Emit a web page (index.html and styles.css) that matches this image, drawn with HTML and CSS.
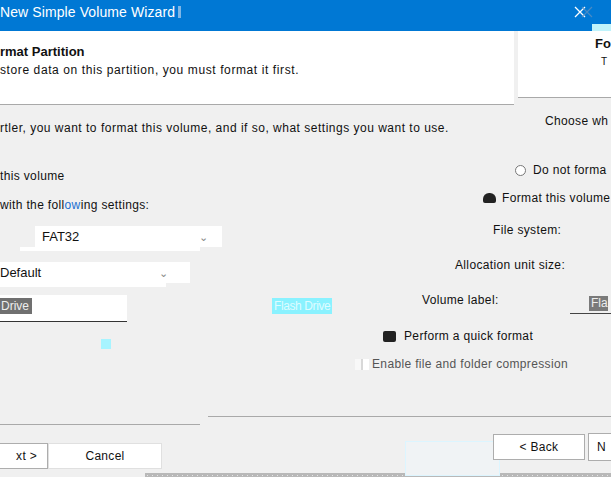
FILE: index.html
```html
<!DOCTYPE html>
<html>
<head>
<meta charset="utf-8">
<link rel="stylesheet" href="styles.css">
</head>
<body>
<div class="win">
  <div class="titlebar">
    <span class="title">New Simple Volume Wizard</span>
    <span class="stub"></span>
    <span class="close">
      <svg width="24" height="14" viewBox="0 0 24 14"><path d="M1 2 L11 12 M11 2 L1 12" stroke="#fff" stroke-width="1.3" fill="none"/><path d="M8 2 L18 12 M18 2 L8 12" stroke="#5a8fc0" stroke-width="1.2" fill="none" opacity="0.8"/></svg>
    </span>
    <span class="cyanblock"></span>
  </div>
  <div class="header">
    <div class="hleft">
      <div class="htitle">rmat Partition</div>
      <div class="hsub">store data on this partition, you must format it first.</div>
    </div>
    <div class="hright">
      <div class="htitle r">Fo</div>
      <div class="hsub r">T</div>
    </div>
  </div>
  <div class="body">
    <div class="layer lleft">
      <div class="txt intro">rtler, you want to format this volume, and if so, what settings you want to use.</div>
      <div class="txt thisvol">this volume</div>
      <div class="txt withset">with the foll<span class="blu">ow</span>ing settings:</div>
      <div class="combo fat">
        <div class="cbtop"><span class="ctext">FAT32</span><span class="chev">&#8964;</span></div>
        <div class="cbbot"></div>
      </div>
      <div class="combo def">
        <div class="cbtop"><span class="ctext">Default</span><span class="chev">&#8964;</span></div>
        <div class="cbbot"></div>
      </div>
      <div class="volrow">
        <div class="volfield"><span class="sel">Drive</span></div>
        <div class="cyansel">Flash Drive</div>
      </div>
      <div class="cyansq"></div>
      <div class="sep sepl"></div>
      <div class="btnrow">
        <div class="btn next">xt &gt;</div>
        <div class="btn cancel">Cancel</div>
      </div>
      <div class="checker"></div>
    </div>
    <div class="layer lright">
      <div class="txt choose">Choose wh</div>
      <div class="opt o1"><span class="radio empty"></span><span class="txt">Do not forma</span></div>
      <div class="opt o2"><span class="radio full"></span><span class="txt">Format this volume</span></div>
      <div class="txt fs">File system:</div>
      <div class="txt aus">Allocation unit size:</div>
      <div class="opt vl"><span class="txt">Volume label:</span><span class="flafield"><span class="fla">Fla</span></span></div>
      <div class="opt o3"><span class="chk full"></span><span class="txt">Perform a quick format</span></div>
      <div class="opt o4"><span class="chk grey"></span><span class="txt greyt">Enable file and folder compression</span></div>
      <div class="sep sepr"></div>
      <div class="btnrow r">
        <div class="ghost"></div>
        <div class="btn back">&lt; Back</div>
        <div class="btn nbtn">N</div>
      </div>
    </div>
  </div>
</div>
</body>
</html>
```

FILE: styles.css
```css
* { box-sizing: border-box; }
html, body { margin: 0; padding: 0; }
body {
  width: 611px; height: 477px; overflow: hidden;
  background: #f0f0f0;
  font-family: "Liberation Sans", Arial, sans-serif;
  font-size: 12px; color: #111;
}
.win { width: 611px; height: 477px; display: flex; flex-direction: column; overflow: hidden; }

.titlebar {
  height: 31px; flex: none; background: #0078d4;
  display: flex; align-items: flex-start; position: relative;
}
.title { color: #fff; font-size: 14px; line-height: 16px; margin-top: 4px; margin-left: 0; letter-spacing: 0.1px; white-space: nowrap; }
.stub { width: 3px; height: 12px; background: #7fb6e6; margin-top: 6px; margin-left: 3px; }
.close { margin-left: auto; margin-right: 13px; margin-top: 5px; display: flex; }
.cyanblock { position: absolute; right: 0; bottom: 0; width: 19px; height: 7px; background: #bff3fb; }

.header { height: 74px; flex: none; display: flex; align-items: flex-start; }
.hleft { width: 516px; height: 74px; background: #fff; border-bottom: 1px solid #a9a9a9; padding-top: 13px; }
.hright { flex: 1; height: 67px; margin-left: 4px; background: #fff; border-bottom: 1px solid #a9a9a9; padding-top: 5px; padding-left: 77px; }
.htitle { font-weight: bold; font-size: 13px; line-height: 16px; white-space: nowrap; }
.hsub { font-size: 12px; line-height: 16px; margin-top: 2px; white-space: nowrap; letter-spacing: 0.6px; }
.hsub.r { margin-left: 6px; font-size: 10px; }

.body { flex: 1; display: grid; min-height: 0; }
.layer { grid-area: 1 / 1; display: flex; flex-direction: column; align-items: flex-start; min-width: 0; }
.txt { line-height: 16px; white-space: nowrap; letter-spacing: 0.35px; }
.blu { color: #1b6fd1; }

.intro { margin-top: 15px; letter-spacing: 0.5px; }
.thisvol { margin-top: 32px; }
.withset { margin-top: 13px; }

.combo { position: relative; height: 25px; }
.combo .cbtop { background: #fff; height: 21px; display: flex; align-items: center; }
.combo .cbbot { background: #fff; height: 4px; }
.fat { margin-top: 13px; width: 222px; }
.fat .cbtop { margin-left: 35px; }
.fat .cbbot { margin-left: 20px; width: 180px; }
.fat .ctext { margin-left: 7px; font-size: 13px; }
.fat .chev { margin-left: auto; margin-right: 14px; }
.def { margin-top: 11px; width: 190px; }
.def .cbbot { width: 166px; }
.def .ctext { font-size: 13px; }
.def .chev { margin-left: auto; margin-right: 22px; }
.chev { color: #888; font-size: 11px; line-height: 10px; }

.volrow { margin-top: 8px; display: flex; width: 100%; align-items: flex-start; }
.volfield { width: 127px; height: 27px; background: #fff; border-bottom: 1px solid #333; margin-right: -23px; padding-top: 3px; }
.sel { background: #707070; color: #eee; padding: 0 3px 0 1px; line-height: 16px; display: inline-block; }
.cyansel { margin-left: 168px; margin-top: 3px; background: #8af2ff; color: #dffcff; line-height: 16px; padding: 0 2px; white-space: nowrap; letter-spacing: -0.4px; }

.cyansq { margin-top: 17px; margin-left: 101px; width: 10px; height: 10px; background: #a7f4ff; }

.sep { height: 1px; background: #a9a9a9; }
.sepl { margin-top: 75px; width: 200px; }
.sepr { margin-top: 44px; margin-left: 208px; width: 403px; }

.btnrow { margin-top: 18px; display: flex; align-items: flex-start; }
.btn { height: 26px; background: #fff; border: 1px solid #adadad; display: flex; align-items: center; justify-content: center; line-height: 16px; letter-spacing: 0.3px; }
.next { width: 50px; margin-left: -2px; justify-content: flex-end; padding-right: 10px; }
.cancel { width: 114px; margin-left: 0; border-color: #e0e0e0; }
.checker {
  margin-top: 4px; margin-left: 145px; width: 466px; height: 5px;
  background-color: #b8b8b8;
  background-image: radial-gradient(circle, #e6e6e6 0.8px, transparent 1px);
  background-size: 5px 5px;
}

.choose { margin-top: 8px; margin-left: 545px; }
.opt { display: flex; align-items: center; }
.o1 { margin-left: 515px; margin-top: 33px; }
.o2 { margin-left: 483px; margin-top: 12px; }
.fs { margin-left: 493px; margin-top: 16px; }
.aus { margin-left: 455px; margin-top: 19px; }
.vl { margin-top: 19px; margin-left: 422px; width: 189px; align-items: flex-start; }
.flafield { margin-left: auto; width: 41px; height: 22px; border-bottom: 1px solid #444; padding-left: 19px; padding-top: 4px; }
.fla { background: #7a7a7a; color: #eee; line-height: 15px; display: inline-block; padding-left: 2px; }
.o3 { margin-left: 383px; margin-top: 14px; }
.o4 { margin-left: 355px; margin-top: 12px; }
.greyt { color: #555; }

.radio { width: 11px; height: 11px; border-radius: 50%; margin-right: 7px; flex: none; }
.radio.empty { border: 1px solid #777; background: #fff; }
.radio.full { background: #222; width: 13px; height: 10px; border-radius: 6px 6px 2px 2px; margin-right: 6px; }
.chk { width: 13px; height: 11px; margin-right: 8px; flex: none; }
.chk.full { background: #222; border-radius: 2px; }
.chk.grey { background: linear-gradient(90deg, #f8f8f8 0 6px, #d8d8d8 6px 8px, #fff 8px); width: 14px; margin-right: 3px; }

.btnrow.r { margin-top: 17px; }
.ghost { margin-left: 405px; margin-top: 7px; width: 95px; height: 35px; border: 1px solid #dcf5ff; background: #f0f3f5; flex: none; }
.back { margin-left: -7px; margin-top: 0; width: 92px; flex: none; }
.nbtn { margin-left: 3px; margin-top: -1px; width: 30px; height: 28px; flex: none; justify-content: flex-start; padding-left: 8px; }
```
